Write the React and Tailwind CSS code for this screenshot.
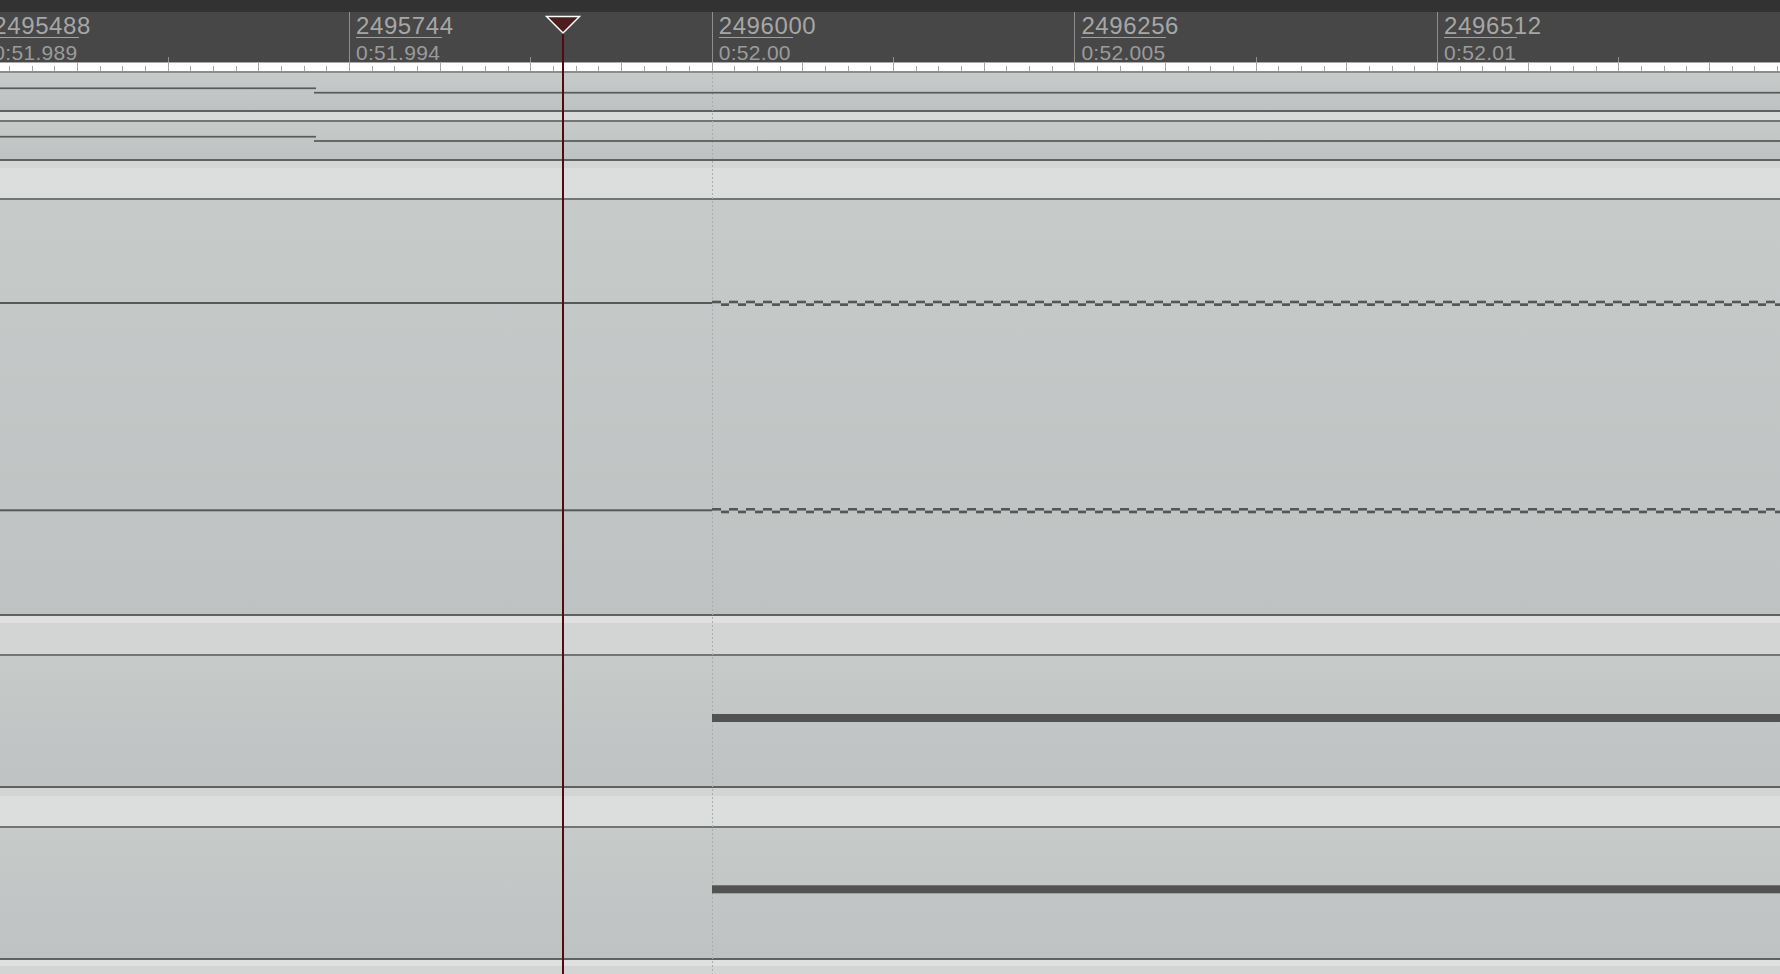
// Zoomed-in timeline: sample ruler on top, signal lanes below, playhead over everything.
const X0 = -13.7
const STEP = 362.7

const MARKS = [
  { n: '2495488', t: '0:51.989', u: 86 },
  { n: '2495744', t: '0:51.994', u: 86 },
  { n: '2496000', t: '0:52.00', u: 74 },
  { n: '2496256', t: '0:52.005', u: 85 },
  { n: '2496512', t: '0:52.01', u: 73 },
]

const FONT = { fontFamily: '"Liberation Sans", Arial, sans-serif' }

function Ruler() {
  return (
    <div className="relative h-[50px] bg-[#474747]" style={FONT}>
      {MARKS.map((m, i) => (
        <div key={m.n} className="absolute top-0 bottom-0" style={{ left: X0 + i * STEP }}>
          <div className="absolute left-0 top-0 bottom-0 w-px bg-[#8e8e8e]" />
          <div className="pl-[7px] pt-[2.6px] flex flex-col items-start">
            <div className="text-[24px] leading-[22px] tracking-[0.6px] text-[#a6a6a6] whitespace-nowrap">{m.n}</div>
            <div className="h-px bg-[#a0a0a0]" style={{ width: m.u }} />
            <div className="mt-[6.2px] text-[21px] leading-[18px] tracking-[0.3px] text-[#9b9b9b] whitespace-nowrap">{m.t}</div>
          </div>
        </div>
      ))}
      {MARKS.map((m, i) => (
        <div
          key={'h' + m.n}
          className="absolute bottom-0 h-[5px] w-px bg-[#8e8e8e]"
          style={{ left: Math.round(X0 + STEP / 2 + i * STEP) }}
        />
      ))}
    </div>
  )
}

function TickStrip() {
  const ticks = []
  for (let i = 0; ; i++) {
    const x = Math.round(X0 + (i * STEP) / 16)
    if (x > 1780) break
    if (x < 0) continue
    const tall = i % 4 === 0
    ticks.push(<rect key={i} x={x} y={tall ? 1 : 4} width="1" height={tall ? 8 : 5} fill="#a6a6a6" />)
  }
  return (
    <svg width="1780" height="11" className="block" shapeRendering="crispEdges">
      <rect width="1780" height="11" fill="#ffffff" />
      <rect width="1780" height="1" fill="#a9a9a9" />
      <rect y="9" width="1780" height="2" fill="#8c8c8c" />
      {ticks}
    </svg>
  )
}

function Wave({ y }) {
  // flat until the edit point, then a fine square wave
  const rects = [<rect key="flat" x="0" y={y} width="712" height="2" fill="#575858" />]
  for (let k = 0; 712 + 17 * k < 1780; k++) {
    const x = 712 + 17 * k
    rects.push(<rect key={'h' + k} x={x} y={y - 1.3} width="9" height="2.6" fill="#555656" />)
    rects.push(<rect key={'l' + k} x={x + 9} y={y + 1.3} width="8" height="2.7" fill="#555656" />)
  }
  return rects
}

function Lane({ h, children }) {
  return (
    <div className={`relative ${h} bg-linear-to-b from-[#c6cbca] to-[#bec2c2]`}>
      <svg className="absolute inset-0 z-[2]" width="1780" height="100%">
        {children}
      </svg>
    </div>
  )
}

const Dark = () => <div className="h-[2px] bg-[#606262]" />
const Mid = () => <div className="h-[2px] bg-[#737575]" />

export default function App() {
  return (
    <div className="relative w-[1780px] h-[974px] overflow-hidden bg-[#c4c8c8]">
      <div className="h-[12px] bg-[#323232]" />
      <Ruler />
      <TickStrip />

      <Lane h="h-[37px]">
        <rect x="0" y="14.45" width="316" height="1.7" fill="#585959" />
        <rect x="314" y="18.85" width="1466" height="1.7" fill="#585959" />
      </Lane>
      <Dark />
      <div className="h-[8px] bg-[#d9dbda]" />
      <Mid />
      <Lane h="h-[37px]">
        <rect x="0" y="13.85" width="316" height="1.7" fill="#585959" />
        <rect x="314" y="18.15" width="1466" height="1.7" fill="#585959" />
      </Lane>
      <Dark />
      <div className="h-[37px] flex flex-col">
        <div className="h-[7px] bg-[#d4d6d5]" />
        <div className="flex-1 bg-[#dcdedd]" />
      </div>
      <Mid />
      <Lane h="h-[414px]">
        <Wave y={102} />
        <Wave y={309.3} />
      </Lane>
      <Dark />
      <div className="h-[38px] flex flex-col">
        <div className="h-[7px] bg-[#dfe0df]" />
        <div className="flex-1 bg-[#d3d5d4]" />
      </div>
      <Mid />
      <Lane h="h-[130px]">
        <rect x="712" y="58" width="1068" height="8" fill="#525252" />
      </Lane>
      <Dark />
      <div className="h-[38px] flex flex-col">
        <div className="h-[8px] bg-[#d3d5d4]" />
        <div className="flex-1 bg-[#dcdedd]" />
      </div>
      <Mid />
      <Lane h="h-[130px]">
        <rect x="712" y="57.3" width="1068" height="8" fill="#525252" />
      </Lane>
      <Dark />
      <div className="h-[14px] flex flex-col">
        <div className="h-[6px] bg-[#dfe0df]" />
        <div className="flex-1 bg-[#d3d5d4]" />
      </div>

      {/* edit point guide */}
      <div className="absolute left-[712px] top-[73px] bottom-0 w-px z-[1] bg-[repeating-linear-gradient(to_bottom,#a9aeae_0_2px,transparent_2px_4px)]" />

      {/* playhead */}
      <div className="absolute left-[562px] top-[32px] bottom-0 w-[2px] z-[3] bg-[#530a0f]" />
      <svg className="absolute left-[545px] top-[15px] z-[3]" width="36" height="20">
        <polygon points="1.5,1.5 34.5,1.5 18,18" fill="#4f1c1e" stroke="#ffffff" strokeWidth="1.5" />
      </svg>
    </div>
  )
}
